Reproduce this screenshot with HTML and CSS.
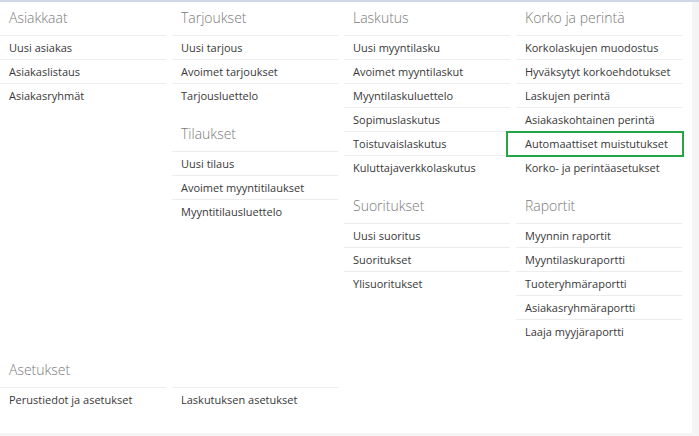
FILE: index.html
```html
<!DOCTYPE html>
<html lang="fi">
<head>
    <meta charset="UTF-8">
    <title>Myynti</title>
    <link rel="stylesheet" href="styles.css">
</head>
<body>
    <div class="panel">
        <div class="menu-grid">
            <div class="menu-col">
                <div class="menu-section">
                    <h2>Asiakkaat</h2>
                    <ul>
                        <li>Uusi asiakas</li>
                        <li>Asiakaslistaus</li>
                        <li>Asiakasryhmät</li>
                    </ul>
                </div>
            </div>
            <div class="menu-col">
                <div class="menu-section">
                    <h2>Tarjoukset</h2>
                    <ul>
                        <li>Uusi tarjous</li>
                        <li>Avoimet tarjoukset</li>
                        <li>Tarjousluettelo</li>
                    </ul>
                </div>
                <div class="menu-section">
                    <h2>Tilaukset</h2>
                    <ul>
                        <li>Uusi tilaus</li>
                        <li>Avoimet myyntitilaukset</li>
                        <li>Myyntitilausluettelo</li>
                    </ul>
                </div>
            </div>
            <div class="menu-col">
                <div class="menu-section">
                    <h2>Laskutus</h2>
                    <ul>
                        <li>Uusi myyntilasku</li>
                        <li>Avoimet myyntilaskut</li>
                        <li>Myyntilaskuluettelo</li>
                        <li>Sopimuslaskutus</li>
                        <li>Toistuvaislaskutus</li>
                        <li>Kuluttajaverkkolaskutus</li>
                    </ul>
                </div>
                <div class="menu-section">
                    <h2>Suoritukset</h2>
                    <ul>
                        <li>Uusi suoritus</li>
                        <li>Suoritukset</li>
                        <li>Ylisuoritukset</li>
                    </ul>
                </div>
            </div>
            <div class="menu-col">
                <div class="menu-section">
                    <h2>Korko ja perintä</h2>
                    <ul>
                        <li>Korkolaskujen muodostus</li>
                        <li>Hyväksytyt korkoehdotukset</li>
                        <li>Laskujen perintä</li>
                        <li>Asiakaskohtainen perintä</li>
                        <li class="highlight">Automaattiset muistutukset</li>
                        <li>Korko- ja perintäasetukset</li>
                    </ul>
                </div>
                <div class="menu-section">
                    <h2>Raportit</h2>
                    <ul>
                        <li>Myynnin raportit</li>
                        <li>Myyntilaskuraportti</li>
                        <li>Tuoteryhmäraportti</li>
                        <li>Asiakasryhmäraportti</li>
                        <li>Laaja myyjäraportti</li>
                    </ul>
                </div>
            </div>
        </div>

        <!-- asetukset omalla rivillään -->
        <div class="menu-grid settings">
            <div class="menu-col">
                <div class="menu-section">
                    <h2>Asetukset</h2>
                    <ul>
                        <li>Perustiedot ja asetukset</li>
                    </ul>
                </div>
            </div>
            <div class="menu-col">
                <div class="menu-section">
                    <h2>&nbsp;</h2>
                    <ul>
                        <li>Laskutuksen asetukset</li>
                    </ul>
                </div>
            </div>
        </div>
    </div>
</body>
</html>
```

FILE: styles.css
```css
/* pohja */
body {
    margin: 0;
    padding: 0;
    font-family: "Open Sans", Arial, sans-serif;
    background: #f4f4f5;
    border-top: 2px solid #cfd8e6;
}

.panel {
    width: 692px;
    height: 431px;
    box-sizing: border-box;
    padding-top: 3px;
    background: #fff;
}

/* sarakkeet */
.menu-grid {
    display: grid;
    grid-template-columns: repeat(4, 166px);
    column-gap: 6px;
}

.menu-grid.settings {
    margin-top: 14px;
}

.menu-section + .menu-section {
    margin-top: 14px;
}

.menu-section h2 {
    margin: 0;
    height: 30px;
    padding: 0 9px;
    font-size: 14px;
    font-weight: 300;
    line-height: 26px;
    color: #7a7a7a;
}

.menu-section ul {
    list-style: none;
    margin: 0;
    padding: 0;
}

/* linkkirivit */
.menu-section li {
    height: 23px;
    padding: 0 9px;
    border-top: 1px solid #ededed;
    font-size: 11px;
    line-height: 23px;
    color: #383838;
    white-space: nowrap;
    cursor: pointer;
}

.menu-section li:hover {
    background: #f7f7f7;
}

/* korostettu rivi */
.menu-section li.highlight {
    position: relative;
}

.menu-section li.highlight::after {
    content: "";
    position: absolute;
    left: -10px;
    right: -2px;
    top: -1px;
    bottom: -2px;
    border: 2px solid #25a546;
}
```
